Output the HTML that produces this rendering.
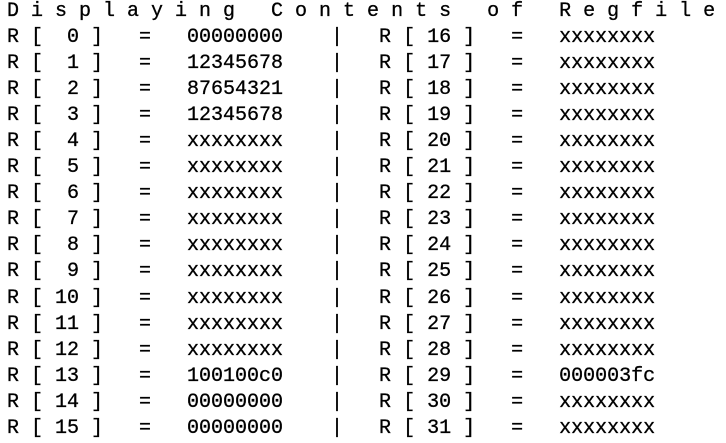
<!DOCTYPE html>
<html><head><meta charset="utf-8"><style>
html,body{margin:0;padding:0;background:#fff;width:726px;height:443px;overflow:hidden}
pre{margin:0;position:absolute;left:7px;top:-1px;font-family:"Liberation Mono",monospace;font-size:20px;line-height:26.05px;color:#000;-webkit-text-stroke:0.3px #000}
</style></head><body>
<pre>D i s p l a y i n g   C o n t e n t s   o f   R e g f i l e
R [  0 ]   =   00000000    |   R [ 16 ]   =   xxxxxxxx
R [  1 ]   =   12345678    |   R [ 17 ]   =   xxxxxxxx
R [  2 ]   =   87654321    |   R [ 18 ]   =   xxxxxxxx
R [  3 ]   =   12345678    |   R [ 19 ]   =   xxxxxxxx
R [  4 ]   =   xxxxxxxx    |   R [ 20 ]   =   xxxxxxxx
R [  5 ]   =   xxxxxxxx    |   R [ 21 ]   =   xxxxxxxx
R [  6 ]   =   xxxxxxxx    |   R [ 22 ]   =   xxxxxxxx
R [  7 ]   =   xxxxxxxx    |   R [ 23 ]   =   xxxxxxxx
R [  8 ]   =   xxxxxxxx    |   R [ 24 ]   =   xxxxxxxx
R [  9 ]   =   xxxxxxxx    |   R [ 25 ]   =   xxxxxxxx
R [ 10 ]   =   xxxxxxxx    |   R [ 26 ]   =   xxxxxxxx
R [ 11 ]   =   xxxxxxxx    |   R [ 27 ]   =   xxxxxxxx
R [ 12 ]   =   xxxxxxxx    |   R [ 28 ]   =   xxxxxxxx
R [ 13 ]   =   100100c0    |   R [ 29 ]   =   000003fc
R [ 14 ]   =   00000000    |   R [ 30 ]   =   xxxxxxxx
R [ 15 ]   =   00000000    |   R [ 31 ]   =   xxxxxxxx</pre>
</body></html>
